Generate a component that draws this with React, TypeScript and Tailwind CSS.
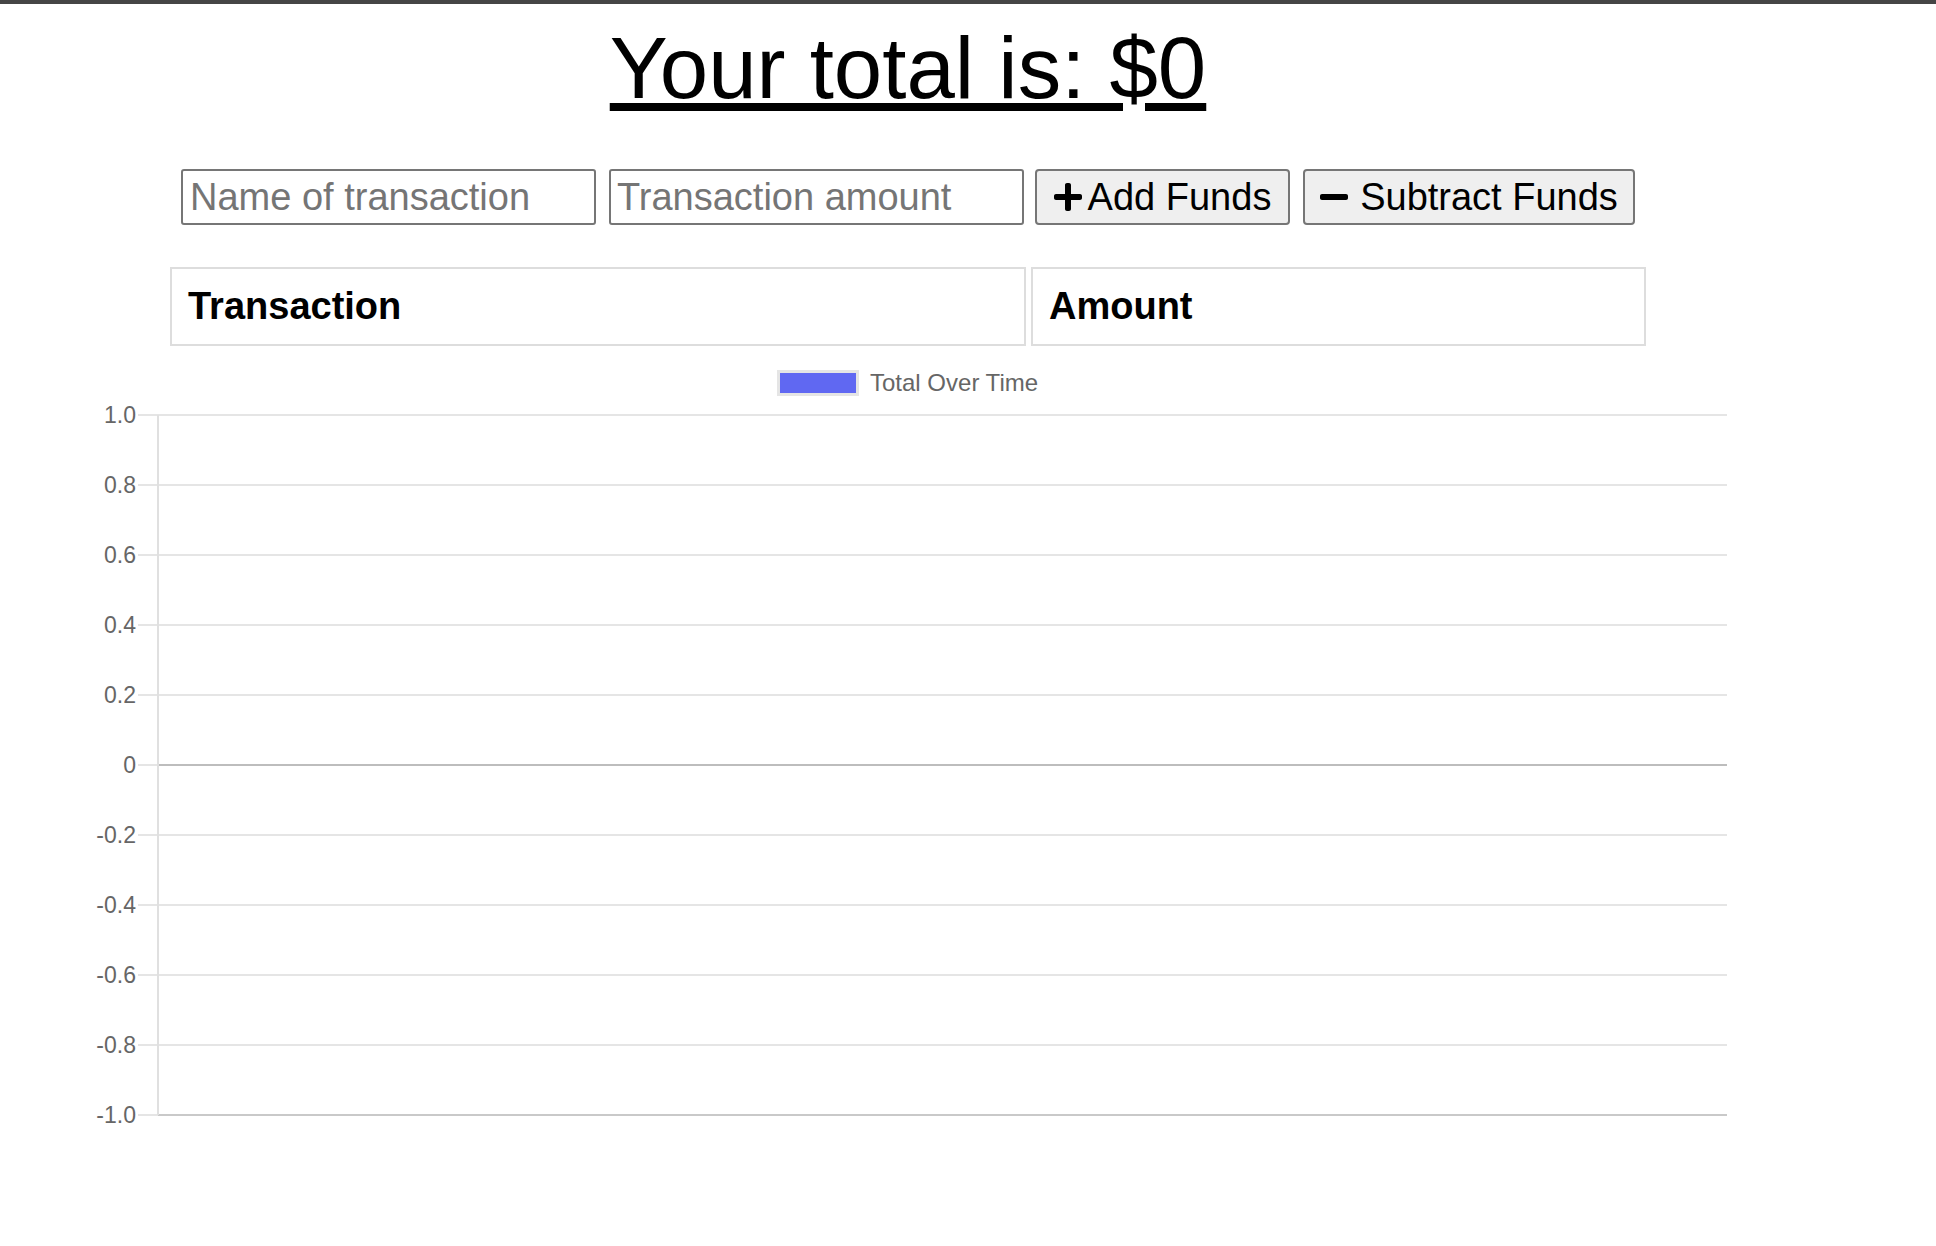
import React from "react";

const yTicks = ["1.0", "0.8", "0.6", "0.4", "0.2", "0", "-0.2", "-0.4", "-0.6", "-0.8", "-1.0"];

// chart origin: svg sits at page y = 350
const top0 = 65;
const step = 70;
const axisX = 158;
const rightX = 1727;

function PlusIcon() {
    return (
        <svg viewBox="0 0 448 512" className="w-[28px] h-[32px]" fill="currentColor">
            <path d="M416 208H272V64c0-17.67-14.33-32-32-32h-32c-17.67 0-32 14.33-32 32v144H32c-17.67 0-32 14.33-32 32v32c0 17.67 14.33 32 32 32h144v144c0 17.67 14.33 32 32 32h32c17.67 0 32-14.33 32-32V304h144c17.67 0 32-14.33 32-32v-32c0-17.67-14.33-32-32-32z" />
        </svg>
    );
}

function MinusIcon() {
    return (
        <svg viewBox="0 0 448 512" className="w-[28px] h-[32px]" fill="currentColor">
            <path d="M416 208H32c-17.67 0-32 14.33-32 32v32c0 17.67 14.33 32 32 32h384c17.67 0 32-14.33 32-32v-32c0-17.67-14.33-32-32-32z" />
        </svg>
    );
}

function Chart() {
    return (
        <svg width={1816} height={800} className="block" style={{ fontFamily: '"Liberation Sans", Arial, sans-serif' }}>
            {/* legend */}
            <rect x={778.5} y={21.5} width={79} height={23} fill="#6068f2" stroke="#e5e5e5" strokeWidth={3} />
            <text x={870} y={41} fontSize={24} fill="#666">Total Over Time</text>

            {yTicks.map((label, i) => {
                const y = top0 + i * step;
                const strong = label === "0";
                const last = i === yTicks.length - 1;
                return (
                    <g key={label}>
                        <line x1={138} x2={axisX} y1={y} y2={y} stroke="#e5e5e5" strokeWidth={2} />
                        <line
                            x1={axisX}
                            x2={rightX}
                            y1={y}
                            y2={y}
                            stroke={strong ? "#bdbdbd" : last ? "#c9c9c9" : "#e5e5e5"}
                            strokeWidth={2}
                        />
                        <text x={136} y={y + 8} fontSize={23} fill="#666" textAnchor="end">
                            {label}
                        </text>
                    </g>
                );
            })}
            <line x1={axisX} x2={axisX} y1={top0} y2={top0 + 10 * step} stroke="#e0e0e0" strokeWidth={2} />
        </svg>
    );
}

export default function App() {
    return (
        <div className="min-h-[1246px] bg-white border-t-[4px] border-[#454545] font-['Liberation_Sans',Arial,sans-serif] text-black">
            <div className="w-[1816px]">
                <h1 className="mt-[21px] text-center text-[87px] leading-[86px] underline font-normal">
                    Your total is: $0
                </h1>

                <div className="mt-[58px] flex justify-center items-center">
                    <input
                        type="text"
                        placeholder="Name of transaction"
                        className="w-[415px] h-[56px] border-2 border-[#767676] rounded-[3px] pl-[7px] text-[38px] placeholder:text-[#757575] outline-none"
                    />
                    <input
                        type="number"
                        placeholder="Transaction amount"
                        className="ml-[13px] w-[415px] h-[56px] border-2 border-[#767676] rounded-[3px] pl-[6px] text-[38px] placeholder:text-[#757575] outline-none"
                    />
                    <button className="ml-[11px] w-[255px] h-[56px] flex items-center justify-center gap-[6px] bg-[#efefef] border-2 border-[#767676] rounded-[4px] text-[38px]">
                        <PlusIcon />
                        <span>Add Funds</span>
                    </button>
                    <button className="ml-[13px] w-[332px] h-[56px] flex items-center justify-center gap-[12px] bg-[#efefef] border-2 border-[#767676] rounded-[4px] text-[38px]">
                        <MinusIcon />
                        <span>Subtract Funds</span>
                    </button>
                </div>

                <div className="mt-[42px] ml-[170px] grid grid-cols-[856px_615px] gap-[5px]">
                    <div className="h-[79px] border-2 border-[#dddddd] pl-[16px] flex items-center text-[38px] font-bold">
                        Transaction
                    </div>
                    <div className="h-[79px] border-2 border-[#dddddd] pl-[16px] flex items-center text-[38px] font-bold">
                        Amount
                    </div>
                </div>

                <div className="mt-[4px]">
                    <Chart />
                </div>
            </div>
        </div>
    );
}
